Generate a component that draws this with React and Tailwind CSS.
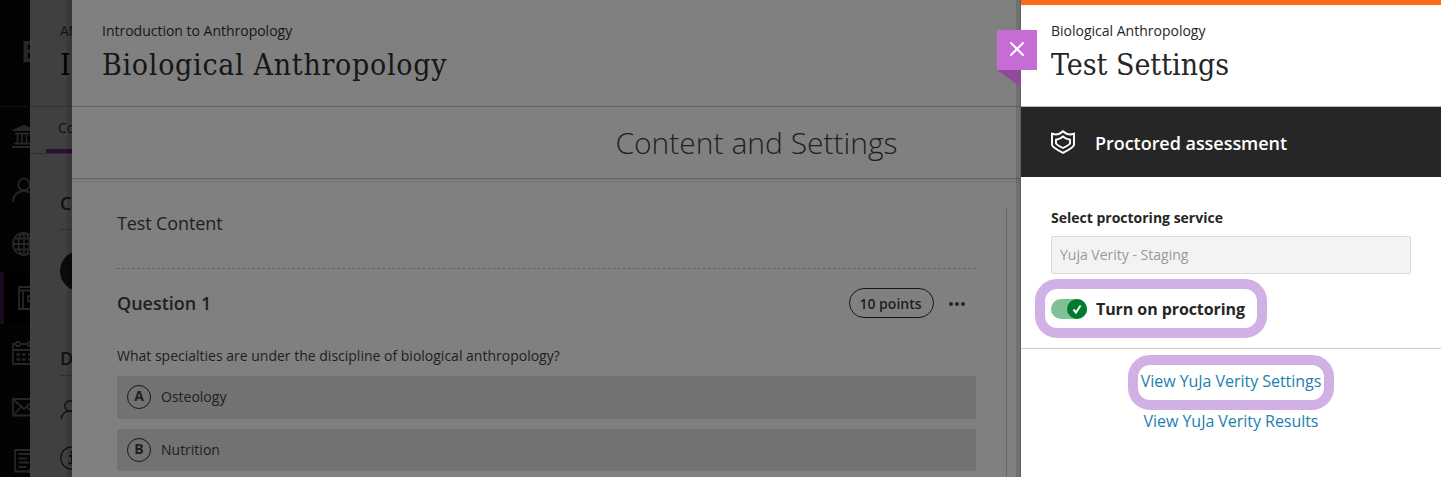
import { X } from 'lucide-react'

const answers = [
  { letter: 'A', text: 'Osteology' },
  { letter: 'B', text: 'Nutrition' },
]

function NavIcon({ children }) {
  return (
    <svg viewBox="0 0 24 24" className="block w-6 h-6 shrink-0" fill="none" stroke="currentColor" strokeWidth="1.8">
      {children}
    </svg>
  )
}

function Sidebar() {
  return (
    <nav className="w-[30px] h-full shrink-0 overflow-hidden bg-[#030303] text-[#262626]">
      <div className="h-[107px] border-b border-[#111] pl-[21px] pt-[35px]">
        <span className="block text-[28px] leading-[32px] font-bold">B</span>
      </div>
      <div className="h-[54px] pl-3 pt-[17px]">
        <NavIcon>
          <path d="M0.5 6.5L12 1l11.5 5.5zM1 6.500h22" fill="currentColor" strokeWidth="1" />
          <path d="M3 9.500h18M5.500 9v10M10 9v10M14.500 9v10M19 9v10M2 19.700h20M0 23h24" />
        </NavIcon>
      </div>
      <div className="h-[54px] pl-3 pt-[17px]">
        <NavIcon>
          <circle cx="12" cy="6.5" r="5.800" />
          <path d="M1 24c0-7 5-11 11-11s11 4 11 11" />
        </NavIcon>
      </div>
      <div className="h-[57px] pl-3 pt-[17px]">
        <NavIcon>
          <circle cx="12" cy="12" r="11" />
          <ellipse cx="12" cy="12" rx="5.5" ry="11" />
          <path d="M12 1v22M1 12h22M3 6.5h18M3 17.5h18" />
        </NavIcon>
      </div>
      <div className="h-[52px] border-l-4 border-[#1b0b1f] bg-black pl-[14px] pt-[14px]">
        <NavIcon>
          <path d="M1 1h22v22H1zM1 4.5h22M5 4.5V23M10 10h9v5h-9z" />
        </NavIcon>
      </div>
      <div className="h-[54px] pl-3 pt-[17px]">
        <NavIcon>
          <path d="M4 3H1v20h22V3h-3M9 3h6M1 9h22" />
          <rect x="4" y="1" width="4" height="4" rx="1" />
          <rect x="16" y="1" width="4" height="4" rx="1" />
          <path d="M4.500 13.500h3.500M10 13.500h3.500M16 13.500h3.500M4.500 18.500h3.500M10 18.500h3.500M16 18.500h3.500" strokeWidth="2.500" />
        </NavIcon>
      </div>
      <div className="h-[54px] pl-3 pt-[17px]">
        <NavIcon>
          <path d="M0.900 4h22.200v16.500H0.900zM2 5l10 9L22 5M2.500 19l6.500-7M21.500 19L15 12" />
        </NavIcon>
      </div>
      <div className="pl-[14px] pt-[17px]">
        <NavIcon>
          <path d="M16 22.500H1V1h19v17M4.500 5h12M4.500 9.500h9M4.500 13.500h11M4.500 18h8" />
          <circle cx="19" cy="22" r="3.500" />
        </NavIcon>
      </div>
    </nav>
  )
}

function CoursePanel() {
  return (
    <div className="relative w-[42px] h-full shrink-0 overflow-hidden whitespace-nowrap bg-[#404040] text-[#111]">
      <div className="h-[107px] border-b border-[#333] pl-[30px] pt-[21px]">
        <p className="text-[14px] leading-5">AN</p>
        <p className="font-['DejaVu_Serif_Condensed','DejaVu_Serif',serif] text-[30px] leading-[48px] text-black">I</p>
      </div>
      <div className="relative h-[47px] border-b border-[#303030] pl-[28px] pt-[11px]">
        <p className="text-[14px] leading-5">Co</p>
        <span className="absolute left-4 right-0 bottom-0 h-1 bg-[#2d0f33]" />
      </div>
      <div className="pl-[30px]">
        <div className="h-[76px] border-b border-[#303030] pt-[37px] text-[18px] leading-6 font-semibold">C</div>
        <div className="mt-[21px] flex size-10 items-center rounded-full bg-[#0b0b0b] pl-[11px] text-[#252525]">
          <svg viewBox="0 0 20 20" className="w-5 h-5 shrink-0" fill="none" stroke="currentColor" strokeWidth="1.5">
            <circle cx="10" cy="7" r="6" />
          </svg>
        </div>
        <div className="h-[85px] border-b border-[#303030] pt-[55px] text-[18px] leading-6 font-semibold">D</div>
        <svg viewBox="0 0 20 20" className="mt-6 w-5 h-5" fill="none" stroke="currentColor" strokeWidth="1.5">
          <circle cx="10" cy="6" r="5.200" />
          <path d="M1 19c1-5 4-8 9-8s8 3 9 8" />
        </svg>
        <svg viewBox="0 0 24 24" className="mt-[26px] w-6 h-6" fill="none" stroke="currentColor" strokeWidth="1.3">
          <circle cx="12" cy="12" r="11.200" />
          <path d="M9 10h3v7M8.500 17.300h7" strokeWidth="2" />
          <circle cx="12" cy="6.500" r="1" fill="currentColor" />
        </svg>
      </div>
      <div className="absolute right-0 top-0 h-full w-[5px] bg-black/12" />
    </div>
  )
}

function TestPanel() {
  return (
    <div className="relative w-[949px] h-full shrink-0 overflow-hidden bg-[#808080] text-[#202020]">
      <header className="h-[107px] border-b border-[#636363] pl-[30px] pt-[21px] text-[#161616]">
        <p className="text-[14px] leading-5 tracking-[-0.01px]">Introduction to Anthropology</p>
        <h1 className="font-['DejaVu_Serif_Condensed','DejaVu_Serif',serif] text-[30px] leading-[48px] tracking-[0.7px] whitespace-nowrap">Biological Anthropology</h1>
      </header>
      <div className="flex h-[72px] items-center justify-center border-b border-[#636363] pl-[420px] text-[30px] font-light whitespace-nowrap">
        Content and Settings
      </div>
      <div className="h-1 bg-[#7c7c7c]" />
      <div className="flex">
        <div className="w-[859px] ml-[45px] pt-[25px]">
          <div className="h-[61px] border-b border-dashed border-[#646464] pt-[3px] text-[18px] leading-6 tracking-[-0.12px]">Test Content</div>
          <div className="flex items-center pt-[19px]">
            <h2 className="flex-1 text-[18px] leading-[30px] font-semibold">Question 1</h2>
            <span className="flex h-[30px] w-[85px] items-center justify-center rounded-full border border-[#161616] pr-[2px] text-[14px] font-semibold">10 points</span>
            <span className="ml-[15px] mr-[11px] mt-px flex gap-[2px]">
              <i className="size-1 rounded-full bg-[#262626]" />
              <i className="size-1 rounded-full bg-[#262626]" />
              <i className="size-1 rounded-full bg-[#262626]" />
            </span>
          </div>
          <p className="mt-7 text-[14px] leading-5">What specialties are under the discipline of biological anthropology?</p>
          <div className="mt-[10px] space-y-[10px]">
            {answers.map(({ letter, text }) => (
              <div key={letter} className="flex h-[43px] gap-[10px] rounded-xs bg-[#727272] pl-[10px] pt-[9px] text-[14px] leading-6 last:h-[42px]">
                <span className="flex size-6 items-center justify-center rounded-full border border-[#161616] pb-[2px] font-bold">{letter}</span>
                <span>{text}</span>
              </div>
            ))}
          </div>
        </div>
        <div className="ml-[30px] mt-[25px] h-[270px] w-px bg-[#686868]" />
      </div>
      <div className="absolute right-0 top-0 h-full w-[5px] border-r border-[#606060] bg-black/12" />
    </div>
  )
}

function SettingsPanel() {
  return (
    <aside className="relative w-[420px] h-full shrink-0 bg-white text-[#262626]">
      <button className="absolute -left-6 top-[30px] flex size-10 items-center justify-center bg-[#c56dd4] pb-[2px] text-white">
        <X size={24} strokeWidth={2} />
      </button>
      <svg viewBox="0 0 24 17" className="absolute -left-6 top-[70px] h-[17px] w-6">
        <path d="M0 0h24v17z" fill="#8d4b98" />
      </svg>
      <header className="h-[107px] border-t-[5px] border-b border-t-[#ff6a1a] border-b-[#b9b9b9] pl-[30px] pt-4">
        <p className="text-[14px] leading-5">Biological Anthropology</p>
        <h1 className="font-['DejaVu_Serif_Condensed','DejaVu_Serif',serif] text-[30px] leading-[48px] whitespace-nowrap">Test Settings</h1>
      </header>
      <div className="flex h-[70px] items-center gap-5 bg-[#262626] pl-[30px] text-white">
        <svg viewBox="0 0 24 24" className="w-6 h-6" fill="none" stroke="currentColor" strokeWidth="1.900">
          <path d="M12 1.200Q8.500 4.500 4.500 4.500L1 3.700V15Q2 18 12 22.800Q22 18 23 15V3.700L19.500 4.500Q15.500 4.500 12 1.200z" />
          <path d="M12 6.500Q9.500 9 5 9.800V13.500Q6.500 15.500 12 18Q17.500 15.500 19 13.500V9.800Q14.500 9 12 6.500z" />
        </svg>
        <span className="pt-[2px] text-[18px] font-semibold tracking-[-0.04px]">Proctored assessment</span>
      </div>
      <div className="h-[172px] border-b border-[#cdcdcd] px-[30px] pt-[31px]">
        <p className="text-[14px] leading-5 font-bold">Select proctoring service</p>
        <div className="mt-2 flex h-[38px] items-center rounded-xs border border-[#dbdbdb] bg-[#f3f3f3] pb-[2px] pl-2 text-[14px] text-[#999]">
          Yuja Verity - Staging
        </div>
        <div className="-ml-4 mt-[5px] flex h-[59px] w-[232px] items-center rounded-[22px] border-10 border-[#d0b0e5] pl-[6px]">
          <span className="flex h-5 w-9 justify-end rounded-full bg-[#80c096]">
            <span className="flex size-5 items-center justify-center rounded-full bg-[#007a2c] text-white">
              <svg viewBox="0 0 20 20" className="w-5 h-5" fill="none" stroke="currentColor" strokeWidth="2">
                <path d="M6.500 10.500l2.500 3 4.500-7" />
              </svg>
            </span>
          </span>
          <span className="ml-[9px] text-[16px] font-bold tracking-[-0.08px] whitespace-nowrap">Turn on proctoring</span>
        </div>
      </div>
      <div className="flex flex-col items-center pt-[6px] text-[16px] tracking-[-0.04px] text-[#1c80ae]">
        <a className="flex h-[55px] w-[206px] items-center justify-center rounded-[22px] border-10 border-[#d0b0e5] pb-[3px] whitespace-nowrap">View YuJa Verity Settings</a>
        <a className="leading-[22px]">View YuJa Verity Results</a>
      </div>
    </aside>
  )
}

export default function App() {
  return (
    <div className="flex h-[477px] w-[1441px] overflow-hidden bg-[#808080] font-['Open_Sans',sans-serif]">
      <Sidebar />
      <CoursePanel />
      <TestPanel />
      <SettingsPanel />
    </div>
  )
}
